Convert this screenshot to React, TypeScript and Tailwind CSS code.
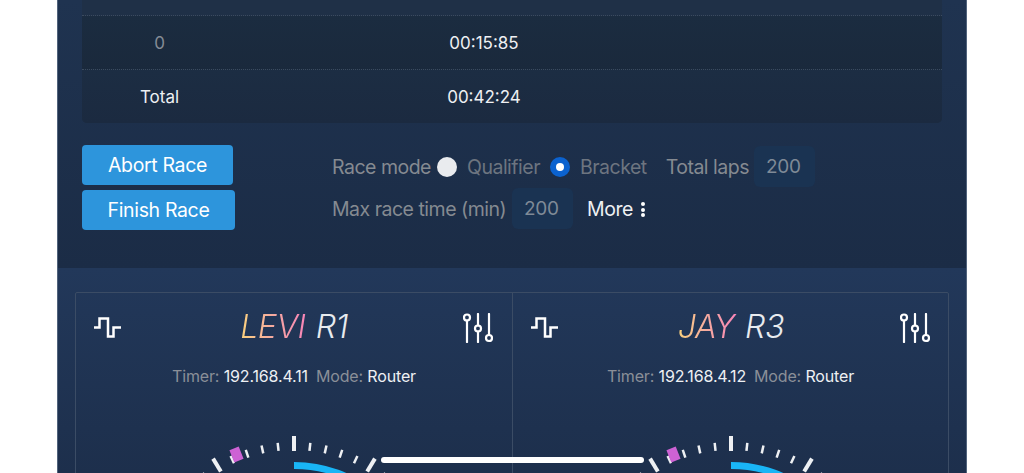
const font = { fontFamily: 'Inter, "Liberation Sans", sans-serif' };

const racers = [
  { name: 'LEVI', round: 'R1', ip: '192.168.4.11' },
  { name: 'JAY', round: 'R3', ip: '192.168.4.12' },
];

const CX = 218;
const CY = 156;
const STEP = 6.25;

function polar(r: number, deg: number) {
  const a = (deg * Math.PI) / 180;
  return { x: CX + r * Math.sin(a), y: CY - r * Math.cos(a) };
}

function Gauge() {
  const ticks = [];
  for (let i = -12; i <= 12; i++) {
    const long = i % 5 === 0;
    const a = polar(long ? 141 : 142, i * STEP);
    const b = polar(long ? 156 : 150, i * STEP);
    ticks.push(
      <line
        key={i}
        x1={a.x}
        y1={a.y}
        x2={b.x}
        y2={b.y}
        stroke="#eef0f3"
        strokeWidth={long ? 4 : 2.5}
      />
    );
  }
  const arcEnd = polar(126.5, 40);
  return (
    <svg width="436" height="40" viewBox="0 0 436 40" className="block">
      {ticks}
      <path
        d={`M${CX} ${CY - 126.5} A126.5 126.5 0 0 1 ${arcEnd.x} ${arcEnd.y}`}
        fill="none"
        stroke="#19b5f6"
        strokeWidth="7"
      />
      <rect x="155.5" y="12" width="10" height="13" fill="#cd62d4" transform="rotate(-22 160.5 18.5)" />
    </svg>
  );
}

function StepIcon() {
  return (
    <svg width="27" height="22" viewBox="0 0 27 22" fill="none" stroke="white" strokeWidth="2.5">
      <path d="M0 10.5H5.5V1.5H14V19.5H19.5V10.5H27" />
    </svg>
  );
}

function SlidersIcon() {
  return (
    <svg width="30" height="30" viewBox="0 0 30 30" fill="none" stroke="white" strokeWidth="2.2" strokeLinecap="round">
      <circle cx="4" cy="4.5" r="3" />
      <path d="M4 7.5V29" />
      <path d="M15 1V12.5" />
      <circle cx="15" cy="15.5" r="3" />
      <path d="M15 18.5V29" />
      <path d="M26 1V22" />
      <circle cx="26" cy="25" r="3" />
    </svg>
  );
}

function RacerCard({ racer, last }: { racer: (typeof racers)[number]; last?: boolean }) {
  return (
    <div className={last ? 'flex-1 min-w-0 pt-[20px]' : 'w-[437px] shrink-0 pt-[20px] border-r border-[#3b4c65]'}>
      <div className={`flex items-center justify-between pl-[18px] h-[30px] ${last ? 'pr-[18px]' : 'pr-[19px]'}`}>
        <StepIcon />
        <div className="ml-[4px] mb-[2px] text-[32px] leading-[28px] font-light italic tracking-[-0.5px] text-[#e8ebef]">
          <span className="bg-gradient-to-r from-[#fbd27c] via-[#f5a9a0] to-[#f783b8] bg-clip-text text-transparent pr-[2px]">
            {racer.name}
          </span>{' '}
          {racer.round}
        </div>
        <SlidersIcon />
      </div>
      <div className="mt-[23px] text-center text-[16px] tracking-[-0.15px] leading-[20px] text-[#8a8f98]">
        Timer: <span className="text-[#eef0f3]">{racer.ip}</span>
        <span className="ml-[8px]">Mode:</span> <span className="text-[#eef0f3]">Router</span>
      </div>
      <div className="mt-[50px]">
        <Gauge />
      </div>
    </div>
  );
}

function NumberBox({ value }: { value: number }) {
  return (
    <div className="w-[61px] h-[41px] rounded-[6px] bg-[#1a3352] text-[#7f8a97] text-[19px] tracking-[-0.3px] leading-[41px] pl-[12px]">
      {value}
    </div>
  );
}

function Radio({ on }: { on?: boolean }) {
  if (on) {
    return (
      <span className="block w-[20px] h-[20px] rounded-full bg-[#0b62cf] p-[6px]">
        <span className="block w-[8px] h-[8px] rounded-full bg-white" />
      </span>
    );
  }
  return <span className="block w-[20px] h-[20px] rounded-full bg-[#e9ebee]" />;
}

export default function App() {
  return (
    <div className="h-[473px] overflow-hidden bg-white relative" style={font}>
      <div className="ml-[57px] w-[910px] h-[473px] border-x border-[#51637c] flex flex-col">
        <section className="h-[268px] shrink-0 px-[24px] bg-gradient-to-b from-[#1f3350] to-[#1b2c46]">
          <div className="rounded-b-[5px] bg-[#1b2b3f] text-[17px]">
            <div className="h-[16px] bg-[#1f3047] border-b border-dotted border-[#3c4b5f]" />
            <div className="flex h-[54px] pt-[2px] items-center border-b border-dotted border-[#3c4b5f] bg-gradient-to-b from-[#1b2c40] to-[#1a293c]">
              <div className="w-[155px] text-center text-[#858c96]">0</div>
              <div className="w-[494px] text-center text-[#eef0f3]">00:15:85</div>
            </div>
            <div className="flex h-[53px] pt-[3px] items-center bg-gradient-to-b from-[#1c2d43] to-[#1b2a40] rounded-b-[5px]">
              <div className="w-[155px] text-center text-[#eef0f3]">Total</div>
              <div className="w-[494px] text-center text-[#eef0f3]">00:42:24</div>
            </div>
          </div>
          <div className="flex mt-[22px]">
            <div className="w-[250px] flex flex-col items-start gap-[5px]">
              <button className="w-[151px] h-[40px] pt-[1px] rounded-[4px] bg-[#2d95dc] text-white text-[19.5px] tracking-[-0.35px]">Abort Race</button>
              <button className="w-[153px] h-[40px] pt-[1px] rounded-[4px] bg-[#2d95dc] text-white text-[19.5px] tracking-[-0.35px]">Finish Race</button>
            </div>
            <div className="text-[19.5px] tracking-[-0.5px] text-[#858a91]">
              <div className="flex items-center h-[41px] mt-[1px]">
                <span className="pt-[2px]">Race mode</span>
                <span className="ml-[6px]"><Radio /></span>
                <span className="ml-[10px] pt-[2px] text-[#6d7580]">Qualifier</span>
                <span className="ml-[10px]"><Radio on /></span>
                <span className="ml-[10px] pt-[2px] text-[#6d7580]">Bracket</span>
                <span className="ml-[19px] pt-[2px]">Total laps</span>
                <span className="ml-[5px]"><NumberBox value={200} /></span>
              </div>
              <div className="flex items-center h-[41px] mt-[1px]">
                <span className="pt-[2px]">Max race time (min)</span>
                <span className="ml-[6px]"><NumberBox value={200} /></span>
                <span className="ml-[14px] pt-[2px] text-[#eef0f3]">More</span>
                <span className="ml-[8px] mt-[2px] flex flex-col gap-[1.5px]">
                  <span className="block w-[4px] h-[4px] rounded-full bg-white" />
                  <span className="block w-[4px] h-[4px] rounded-full bg-white" />
                  <span className="block w-[4px] h-[4px] rounded-full bg-white" />
                </span>
              </div>
            </div>
          </div>
        </section>
        <section className="flex-1 px-[17px] pt-[24px] bg-gradient-to-b from-[#22385a] to-[#1a2a44]">
          <div className="flex h-[300px] border border-[#3b4c65] rounded-[2px]">
            {racers.map((r, i) => (
              <RacerCard key={r.name} racer={r} last={i === racers.length - 1} />
            ))}
          </div>
        </section>
      </div>
      <div className="absolute left-[381px] top-[457px] w-[263px] h-[6px] rounded-full bg-white" />
    </div>
  );
}
